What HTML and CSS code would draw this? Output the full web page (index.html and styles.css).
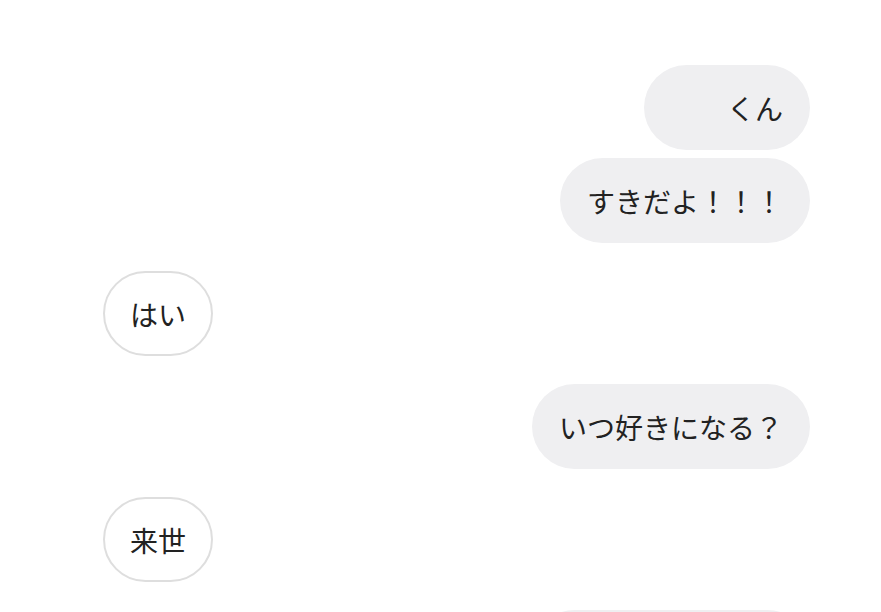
FILE: index.html
```html
<!DOCTYPE html>
<html lang="ja">

<head>
    <meta charset="UTF-8">
    <meta name="viewport" content="width=device-width, initial-scale=1.0">
    <title>トーク</title>
    <link rel="stylesheet" href="styles.css">
</head>

<body>
    <div class="chat">
        <div class="group me">
            <div class="bubble"><span class="name-blank"></span>くん</div>
            <div class="bubble">すきだよ！！！</div>
        </div>

        <div class="group them">
            <div class="bubble">はい</div>
        </div>

        <div class="group me">
            <div class="bubble">いつ好きになる？</div>
        </div>

        <div class="group them">
            <div class="bubble">来世</div>
        </div>

        <div class="group me">
            <div class="bubble bubble-cut"></div>
        </div>
    </div>
</body>

</html>
```

FILE: styles.css
```css
:root {
    --color-1: #fff;
    --color-2: #222;
    --color-3: #efeff1;
    --color-4: #dedede;
}

body {
    font-family: "Noto Sans CJK JP", "Noto Sans", sans-serif;
    background-color: var(--color-1);
    margin: 0;
    padding: 0;
    overflow: hidden;
    height: 612px;
}

.chat {
    display: flex;
    flex-direction: column;
    gap: 28px;
    padding: 65px 71px 0 103px;
}

.group {
    display: flex;
    flex-direction: column;
    gap: 8px;
}

.group.me {
    align-items: flex-end;
}

.group.them {
    align-items: flex-start;
}

.bubble {
    display: flex;
    align-items: center;
    height: 85px;
    box-sizing: border-box;
    padding: 0 27px;
    border-radius: 43px;
    font-size: 28px;
    color: var(--color-2);
    white-space: nowrap;
}

.me .bubble {
    background-color: var(--color-3);
}

.them .bubble {
    background-color: var(--color-1);
    border: 2px solid var(--color-4);
    padding: 0 25px;
}

.name-blank {
    display: inline-block;
    width: 56px;
}

.bubble-cut {
    width: 278px;
}
```
